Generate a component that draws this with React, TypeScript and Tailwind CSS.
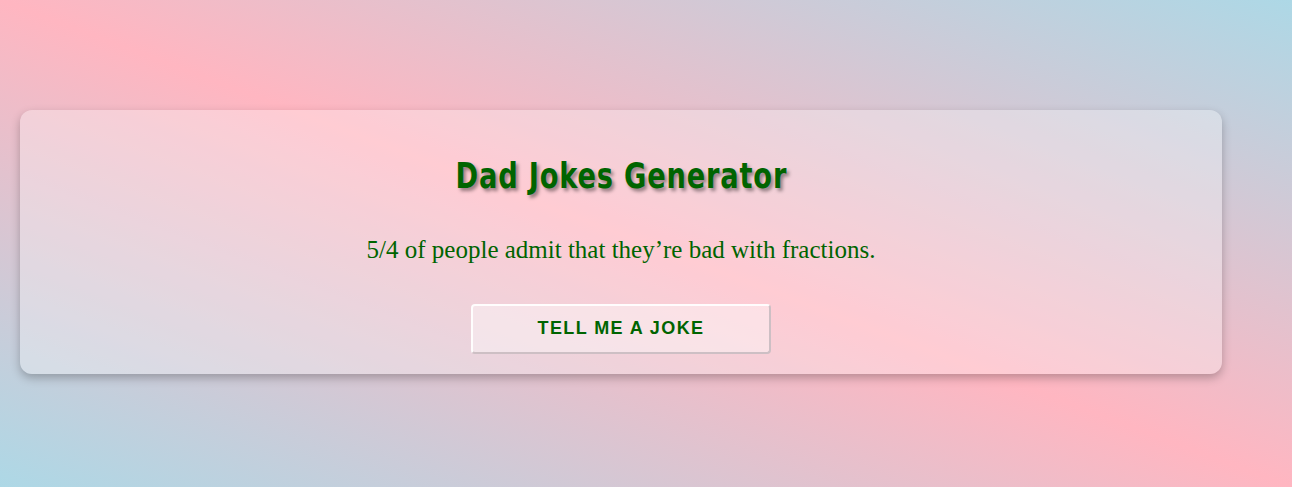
import { useState } from "react";

const jokes = [
    "5/4 of people admit that they’re bad with fractions.",
    "I’m reading a book about anti-gravity. It’s impossible to put down.",
    "Why don’t skeletons fight each other? They don’t have the guts.",
];

export default function App() {
    const [joke, setJoke] = useState(jokes[0]);

    function handleClick() {
        const next = jokes[(jokes.indexOf(joke) + 1) % jokes.length];
        setJoke(next);
    }

    return (
        <div className="min-h-screen w-full flex items-center px-5 pb-1 bg-[linear-gradient(to_top_right,#add8e6,#ffb6c1,#add8e6)]">
            <div className="w-[1202px] rounded-xl bg-white/30 shadow-[0_4px_10px_rgba(0,0,0,0.25)] p-5 flex flex-col items-center text-[#006400]">
                <h1 className="mt-6 mb-[37px] scale-x-[0.84] text-[36px] leading-[44px] font-bold tracking-[1px] font-stretch-condensed font-['DejaVu_Sans_Condensed','DejaVu_Sans',sans-serif] [text-shadow:3px_3px_4px_rgba(0,0,0,0.4)]">
                    Dad Jokes Generator
                </h1>

                <p className="text-[25px] leading-[29px] font-['Liberation_Serif',serif]">
                    {joke}
                </p>

                <button
                    onClick={handleClick}
                    className="mt-10 w-[300px] h-[50px] rounded border-2 border-t-white/90 border-l-white/90 border-b-[#cdbfc4] border-r-[#cdbfc4] bg-white/40 text-[18px] font-bold tracking-[1.4px] font-['Liberation_Sans',sans-serif] text-[#006400]"
                >
                    TELL ME A JOKE
                </button>
            </div>
        </div>
    );
}
